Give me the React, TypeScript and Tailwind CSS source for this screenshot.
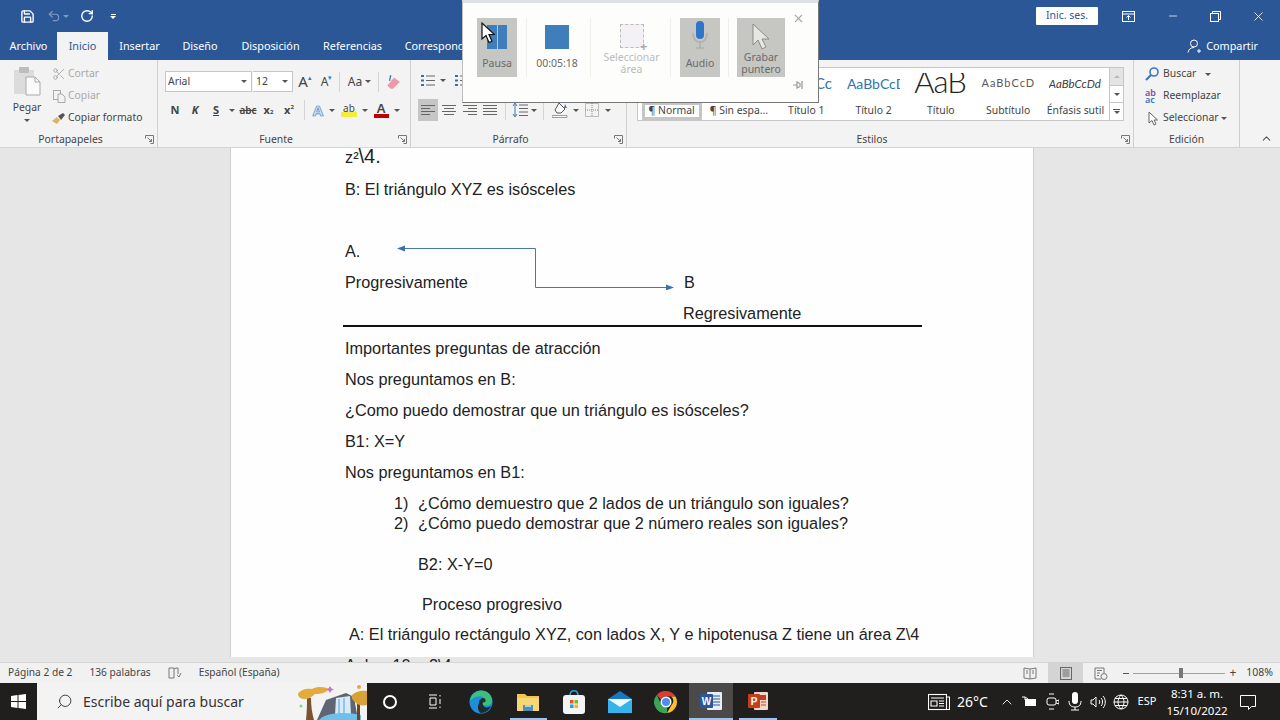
import React from "react";
import { Save, Undo2, RotateCw, X, Minus, Scissors, Search, ChevronUp } from "lucide-react";

function Caret({ color = "#555" }: { color?: string }) {
  return <span className="inline-block w-0 h-0 border-x-[3px] border-t-[3px] border-x-transparent" style={{ borderTopColor: color }} />;
}

function Launcher() {
  return (
    <svg width="9" height="9" viewBox="0 0 9 9" className="shrink-0" fill="none" stroke="#777">
      <path d="M.5 3.500V.500h8v8h-3M2.500 2.500l4 4M6.500 4v2.500H4" />
    </svg>
  );
}

function Sep({ h = "h-[20px]" }: { h?: string }) {
  return <span className={`inline-block w-px bg-[#d4d4d4] ${h}`} />;
}

function Cell({ w, children, className = "" }: { w: string; children?: React.ReactNode; className?: string }) {
  return <span className={`flex items-center justify-center shrink-0 h-full ${w} ${className}`}>{children}</span>;
}

function Group({ w, label, launcher = true, children }: { w: string; label: string; launcher?: boolean; children: React.ReactNode }) {
  return (
    <div className={`flex flex-col h-full shrink-0 border-r border-[#cfcfcf] ${w}`}>
      <div className="flex-1 min-h-0">{children}</div>
      <div className={`flex items-center h-[19px] pt-[4px] text-[#444] ${launcher ? "pr-[3px]" : ""}`}>
        <span className={`flex-1 text-center ${launcher ? "pr-[4px]" : ""}`}>{label}</span>
        {launcher && <Launcher />}
      </div>
    </div>
  );
}

function AlignIcon({ lines }: { lines: [number, number][] }) {
  return (
    <svg width="14" height="12" viewBox="0 0 14 12" stroke="#666" strokeWidth="1">
      {lines.map((l, i) => (
        <path key={i} d={`M${l[0]} ${1.5 + i * 3}H${l[1]}`} />
      ))}
    </svg>
  );
}

function Clipboard() {
  return (
    <div className="flex flex-col items-center w-[45px] pl-[9px] shrink-0">
      <svg width="28" height="30" viewBox="0 0 28 30" className="mt-[6px]">
        <rect x="1" y="4" width="20" height="24" fill="#dcdcdc" />
        <rect x="6" y="1" width="10" height="6" rx="1" fill="#bdbdbd" />
        <path d="M13 11h9l5 5v13H13z" fill="#fafafa" stroke="#aaa" />
        <path d="M22 11v5h5" fill="none" stroke="#aaa" />
      </svg>
      <span className="text-[#444] mt-[3px] leading-[16px]">Pegar</span>
      <span className="mt-[4px] flex"><Caret /></span>
    </div>
  );
}

function ClipboardRows() {
  return (
    <div className="flex flex-col pt-[3px] pl-[5px]">
      <div className="flex items-center h-[22px] text-[#a9a9a9]">
        <span className="w-[18px] flex justify-center"><Scissors size={14} color="#a0a0a0" strokeWidth={1.4} /></span>
        <span>Cortar</span>
      </div>
      <div className="flex items-center h-[22px] text-[#a9a9a9]">
        <span className="w-[18px] flex justify-center">
          <svg width="13" height="13" viewBox="0 0 13 13" fill="#f3f3f3" stroke="#aaa">
            <rect x=".5" y=".5" width="7" height="9" />
            <path d="M5 4h4l3 3v5.500H5z" />
          </svg>
        </span>
        <span>Copiar</span>
      </div>
      <div className="flex items-center h-[22px] text-[#444]">
        <span className="w-[18px] flex justify-center">
          <svg width="15" height="13" viewBox="0 0 15 13">
            <path d="M0 9l5-4 3 3-3 4z" fill="#e3b15f" />
            <path d="M6 4l5-3 2 2-4 5z" fill="#555" />
          </svg>
        </span>
        <span className="whitespace-nowrap">Copiar formato</span>
      </div>
    </div>
  );
}

function FontGroup() {
  return (
    <div className="pt-[11px] pl-[7px] text-[#444]">
      <div className="flex items-center h-[21px]">
        <div className="flex items-center justify-between w-[87px] h-full bg-white border border-[#c6c6c6] pl-[2px] pr-[4px]">
          <span>Arial</span>
          <Caret />
        </div>
        <div className="flex items-center justify-between w-[40px] h-full bg-white border border-l-0 border-[#c6c6c6] pl-[3px] pr-[4px] ml-px">
          <span>12</span>
          <Caret />
        </div>
        <Cell w="w-[22px] ml-[1px]" className="text-[15px]">A<sup className="text-[7px] text-[#3b78b8]">▴</sup></Cell>
        <Cell w="w-[21px]" className="text-[12px]">A<sup className="text-[7px] text-[#3b78b8]">▾</sup></Cell>
        <Cell w="w-[4px]"><Sep /></Cell>
        <Cell w="w-[37px]" className="gap-[3px] text-[12px]">Aa<Caret /></Cell>
        <Cell w="w-[1px]"><Sep /></Cell>
        <Cell w="w-[28px]">
          <svg width="16" height="16" viewBox="0 0 14 14">
            <path d="M5 13l-3-3 6-7 5 4-6 6z" fill="#ea9aa8" />
            <path d="M5 1l-1 5" stroke="#3b78b8" strokeWidth="1.2" />
          </svg>
        </Cell>
      </div>
      <div className="flex items-center h-[22px] mt-[7px] text-[11px]">
        <Cell w="w-[20px]" className="font-bold">N</Cell>
        <Cell w="w-[20px]" className="font-bold italic">K</Cell>
        <Cell w="w-[20px] ml-px" className="font-bold underline">S</Cell>
        <Cell w="w-[12px]"><Caret /></Cell>
        <Cell w="w-[20px]" className="line-through text-[10px] font-semibold">abc</Cell>
        <Cell w="w-[21px]" className="font-bold">x<sub className="text-[6px]">2</sub></Cell>
        <Cell w="w-[20px]" className="font-bold">x<sup className="text-[6px]">2</sup></Cell>
        <Cell w="w-[10px]"><Sep /></Cell>
        <Cell w="w-[18px]">
          <span className="text-[15px] font-bold text-[#d6e4f5] [-webkit-text-stroke:0.7px_#4a86c5]">A</span>
        </Cell>
        <Cell w="w-[10px]"><Caret /></Cell>
        <Cell w="w-[24px]" className="flex-col leading-none">
          <span className="text-[10px] -mb-[1px]">ab</span>
          <span className="w-[16px] h-[5px] bg-[#f6ec3c]" />
        </Cell>
        <Cell w="w-[8px]"><Caret /></Cell>
        <Cell w="w-[24px]" className="flex-col leading-none">
          <span className="text-[13px] font-semibold -mb-[1px]">A</span>
          <span className="w-[15px] h-[4px] bg-[#c00000]" />
        </Cell>
        <Cell w="w-[8px]"><Caret /></Cell>
      </div>
    </div>
  );
}

function ParagraphGroup() {
  return (
    <div className="pt-[10px] pl-[7px]">
      <div className="flex items-center h-[21px]">
        <Cell w="w-[20px]">
          <svg width="14" height="13" viewBox="0 0 14 13" stroke="#666">
            <path d="M5 2h9M5 6.500h9M5 11h9" />
            <path d="M0 2h3M0 6.500h3M0 11h3" stroke="#3b6ea8" strokeWidth="2" />
          </svg>
        </Cell>
        <Cell w="w-[10px]"><Caret /></Cell>
        <Cell w="w-[4px]" />
        <Cell w="w-[20px]">
          <svg width="14" height="13" viewBox="0 0 14 13" stroke="#666">
            <path d="M5 2h9M5 6.500h9M5 11h9" />
            <path d="M0 2h3M0 6.500h3M0 11h3" stroke="#3b6ea8" strokeWidth="2" />
          </svg>
        </Cell>
      </div>
      <div className="flex items-center h-[22px] mt-[8px]">
        <Cell w="w-[20px]" className="bg-[#c6c6c6]"><AlignIcon lines={[[0, 14], [0, 9], [0, 14], [0, 9]]} /></Cell>
        <Cell w="w-[21px]"><AlignIcon lines={[[0, 14], [2, 12], [0, 14], [2, 12]]} /></Cell>
        <Cell w="w-[21px]"><AlignIcon lines={[[0, 14], [5, 14], [0, 14], [5, 14]]} /></Cell>
        <Cell w="w-[20px]"><AlignIcon lines={[[0, 14], [0, 14], [0, 14], [0, 14]]} /></Cell>
        <Cell w="w-[10px]"><Sep /></Cell>
        <Cell w="w-[20px]">
          <svg width="16" height="16" viewBox="0 0 16 16" fill="none">
            <path d="M7 3h9M7 6.500h9M7 10h9M7 13.500h9" stroke="#666" />
            <path d="M3 2v12M1 4l2-3 2 3M1 12l2 3 2-3" stroke="#3b78b8" />
          </svg>
        </Cell>
        <Cell w="w-[8px]"><Caret /></Cell>
        <Cell w="w-[10px]"><Sep /></Cell>
        <Cell w="w-[23px]">
          <svg width="16" height="16" viewBox="0 0 16 16" fill="none">
            <path d="M7 1l6 6-4 4H5L3 8z" fill="#fafafa" stroke="#555" />
            <path d="M13 2l2 4h-3z" fill="#3b78b8" />
            <path d="M0 13.500h15v2H0z" fill="#fafafa" stroke="#777" strokeWidth=".7" />
          </svg>
        </Cell>
        <Cell w="w-[10px]"><Caret /></Cell>
        <Cell w="w-[21px]">
          <svg width="14" height="14" viewBox="0 0 14 14" fill="none" stroke="#888" strokeDasharray="1 1">
            <rect x=".5" y=".5" width="13" height="13" />
            <path d="M7 0v14M0 7h14" />
          </svg>
        </Cell>
        <Cell w="w-[12px]"><Caret /></Cell>
      </div>
    </div>
  );
}

const styleItems = [
  { label: "¶ Normal", preview: "", cls: "" },
  { label: "¶ Sin espa...", preview: "", cls: "" },
  { label: "Título 1", preview: "AaBbCcD", cls: "text-[#2e74b5] text-[15px] font-['Lato',sans-serif]" },
  { label: "Título 2", preview: "AaBbCcD", cls: "text-[#2e74b5] text-[14px] font-['Lato',sans-serif]" },
  { label: "Título", preview: "AaB", cls: "text-[#222] text-[31px] leading-[21px] tracking-[-1px] font-light font-['Lato',sans-serif] -translate-y-[2px] inline-block" },
  { label: "Subtítulo", preview: "AaBbCcDd", cls: "text-[#5a5a5a] text-[11px] tracking-[1px] font-['Lato',sans-serif]" },
  { label: "Énfasis sutil", preview: "AaBbCcDd", cls: "text-[#404040] text-[11.500px] italic font-['Lato',sans-serif]" },
];

function StylesGroup() {
  return (
    <div className="pt-[7px] pl-[10px]">
      <div className="flex w-[487px] h-[54px] bg-white border border-[#c6c6c6]">
        <div className="flex w-[472px]">
          {styleItems.map((s, i) => (
            <div key={s.label} className="flex flex-col items-center w-[67.300px] shrink-0">
              <div className="flex items-start w-full h-[34px] pt-[5px]">
                <div className="flex items-center w-full h-[21px] overflow-hidden whitespace-nowrap mx-[7px]">
                  <span className={s.cls}>{s.preview}</span>
                </div>
              </div>
              <div className={`flex items-center justify-center text-[#444] h-[18px] whitespace-nowrap ${i === 0 ? "w-[60px] border-[3px] border-[#c6c6c6]" : ""}`}>
                {s.label}
              </div>
            </div>
          ))}
        </div>
        <div className="flex flex-col w-[14px] h-full border-l border-[#c6c6c6] ml-auto">
          <div className="flex-1 bg-[#e4e4e4] flex items-center justify-center"><span className="w-0 h-0 border-x-[3px] border-b-[3px] border-x-transparent border-b-[#bbb]" /></div>
          <div className="flex-1 border-y border-[#c6c6c6] flex items-center justify-center"><Caret /></div>
          <div className="flex-1 flex flex-col gap-[1px] items-center justify-center"><span className="w-[7px] h-px bg-[#555]" /><Caret /></div>
        </div>
      </div>
    </div>
  );
}

function EditGroup() {
  return (
    <div className="flex flex-col pt-[3px] pl-[11px] text-[#444]">
      <div className="flex items-center h-[22px]">
        <span className="w-[18px]">
          <svg width="14" height="14" viewBox="0 0 14 14" fill="none">
            <circle cx="9" cy="5" r="4" stroke="#3b78b8" strokeWidth="1.6" />
            <path d="M6 8l-5 5" stroke="#3b78b8" strokeWidth="2.200" />
          </svg>
        </span>
        <span>Buscar</span>
        <span className="ml-[9px] flex"><Caret /></span>
      </div>
      <div className="flex items-center h-[22px]">
        <span className="w-[18px] text-[9px] leading-[7px] font-semibold">
          <span className="text-[#7e4a9e]">ab</span><br /><span className="text-[#3b78b8]">ac</span>
        </span>
        <span>Reemplazar</span>
      </div>
      <div className="flex items-center h-[22px]">
        <span className="w-[18px] pl-[3px]">
          <svg width="10" height="15" viewBox="0 0 10 15" fill="#fff" stroke="#666">
            <path d="M1 1v11l3-2.500 2 4.500 2-1-2-4h3.500z" />
          </svg>
        </span>
        <span>Seleccionar</span>
        <span className="ml-[2px] flex"><Caret /></span>
      </div>
    </div>
  );
}

function Ribbon() {
  return (
    <div className="flex h-[88px] bg-[#f3f3f3] border-b border-[#d5d5d5] text-[10.400px] shrink-0">
      <Group w="w-[158px]" label="Portapapeles">
        <div className="flex">
          <Clipboard />
          <ClipboardRows />
        </div>
      </Group>
      <Group w="w-[253px]" label="Fuente"><FontGroup /></Group>
      <Group w="w-[216px]" label="Párrafo"><ParagraphGroup /></Group>
      <Group w="w-[507px]" label="Estilos"><StylesGroup /></Group>
      <Group w="w-[106px]" label="Edición" launcher={false}><EditGroup /></Group>
      <div className="flex-1 flex items-end justify-center pb-[2px] pl-[12px]">
        <ChevronUp size={13} color="#555" />
      </div>
    </div>
  );
}

const tabs = [
  { name: "Archivo", w: "w-[57px]" },
  { name: "Inicio", w: "w-[51px]" },
  { name: "Insertar", w: "w-[63px]" },
  { name: "Diseño", w: "w-[58px]" },
  { name: "Disposición", w: "w-[83px]" },
  { name: "Referencias", w: "w-[81px]" },
  { name: "Correspondencia", w: "w-[110px]" },
];

function TitleArea() {
  return (
    <div className="bg-[#2b5797] text-white shrink-0">
      <div className="flex items-center h-[32px]">
        <span className="ml-[20px]"><Save size={15} strokeWidth={2.2} /></span>
        <span className="ml-[12px] flex items-center gap-[2px] opacity-40">
          <Undo2 size={14} /><Caret color="#fff" />
        </span>
        <span className="ml-[11px]"><RotateCw size={14} strokeWidth={2.4} /></span>
        <span className="ml-[16px] flex flex-col items-center gap-[1px]"><span className="w-[5px] h-px bg-white" /><Caret color="#fff" /></span>
        <div className="ml-auto flex items-center h-full">
          <span className="flex items-center justify-center w-[62px] h-[18px] bg-white text-[#2b5797] text-[10.500px] rounded-[1px]">Inic. ses.</span>
          <span className="ml-[24px]">
            <svg width="13" height="11" viewBox="0 0 13 11" fill="none" stroke="#fff">
              <rect x=".5" y=".5" width="12" height="10" />
              <path d="M.5 3h12M6.500 9V5M4.500 6.500l2-2 2 2" />
            </svg>
          </span>
          <span className="ml-[32px]"><Minus size={12} strokeWidth={1.5} /></span>
          <span className="ml-[31px]">
            <svg width="11" height="11" viewBox="0 0 11 11" fill="none" stroke="#fff">
              <rect x=".5" y="2.500" width="8" height="8" />
              <path d="M2.500 2.500v-2h8v8h-2" />
            </svg>
          </span>
          <span className="ml-[30px] mr-[14px]"><X size={15} strokeWidth={1.3} /></span>
        </div>
      </div>
      <div className="flex items-stretch h-[28px] text-[10.800px]">
        {tabs.map((t) => (
          <span
            key={t.name}
            className={`flex items-center justify-center whitespace-nowrap ${t.w} ${t.name === "Inicio" ? "bg-[#f3f3f3] text-[#2b5797]" : ""}`}
          >
            {t.name}
          </span>
        ))}
        <span className="ml-auto mr-[22px] flex items-center gap-[4px]">
          <svg width="15" height="16" viewBox="0 0 15 15" fill="none" stroke="#fff">
            <circle cx="7" cy="5" r="3.500" />
            <path d="M1 14c.5-3 2.500-5 6-5M10 12.500h4M12 10.500v4" />
          </svg>
          Compartir
        </span>
      </div>
    </div>
  );
}

function Line({ className = "", children }: { className?: string; children?: React.ReactNode }) {
  return <p className={`h-[31px] leading-[31px] whitespace-nowrap ${className}`}>{children}</p>;
}

function Page() {
  return (
    <div className="flex-1 min-h-0 bg-[#e6e6e6] overflow-hidden">
      <div className="relative ml-[230px] w-[804px] h-full bg-[#fefefe] border-x border-[#cfcfcf] pl-[114px] text-[16.250px] text-[#222] font-['Liberation_Sans',Arial,sans-serif]">
        <div className="-mt-[5.500px]">
          <Line className="-translate-y-[2px]">z²<span className="text-[20px]">\4.</span></Line>
          <Line>B: El triángulo XYZ es isósceles</Line>
          <Line />
          <Line>A.</Line>
          <Line className="flex"><span className="w-[339px]">Progresivamente</span><span>B</span></Line>
          <Line className="pl-[338px]">Regresivamente</Line>
          <div className="w-[579px] -ml-[2px] h-[2px] bg-[#111] -mt-[4px] mb-[6px]" />
          <Line>Importantes preguntas de atracción</Line>
          <Line>Nos preguntamos en B:</Line>
          <Line>¿Como puedo demostrar que un triángulo es isósceles?</Line>
          <Line>B1: X=Y</Line>
          <Line>Nos preguntamos en B1:</Line>
          <ol className="pl-[49px] leading-[20px] mt-[5px]">
            <li className="flex h-[20.500px]"><span className="w-[24px]">1)</span>¿Cómo demuestro que 2 lados de un triángulo son iguales?</li>
            <li className="flex h-[20.500px]"><span className="w-[24px]">2)</span>¿Cómo puedo demostrar que 2 número reales son iguales?</li>
          </ol>
          <p className="pl-[73px] h-[20px] leading-[20px] mt-[20px]">B2: X-Y=0</p>
          <p className="pl-[77px] h-[20px] leading-[20px] mt-[20px]">Proceso progresivo</p>
          <Line className="pl-[4px] mt-[5px]">A: El triángulo rectángulo XYZ, con lados X, Y e hipotenusa Z tiene un área Z\4</Line>
          <Line>A: b = 10 = 2\4</Line>
        </div>
        {/* flecha del diagrama */}
        <svg className="absolute left-[166px] top-[92px] translate-y-[5px]" width="280" height="50" viewBox="0 0 280 50" fill="none">
          <path d="M7 8.500h131.500v39H270" stroke="#4a76b0" strokeWidth="1" />
          <path d="M0 8.500L8 5.500v6z" fill="#3f6fb0" />
          <path d="M277 47.500l-8-3v6z" fill="#3f6fb0" />
        </svg>
      </div>
    </div>
  );
}

function StatusBar() {
  return (
    <div className="flex items-center h-[21px] bg-[#f1f1f1] border-t border-[#d5d5d5] text-[10.200px] text-[#444] shrink-0">
      <span className="ml-[8px]">Página 2 de 2</span>
      <span className="ml-[17px]">136 palabras</span>
      <svg className="ml-[17px]" width="14" height="13" viewBox="0 0 14 13" fill="none" stroke="#777">
        <path d="M1 1h5v10H1zM6 2c1-1 3-1 4-1v6M9 8l2 2 2-4" />
      </svg>
      <span className="ml-[17px]">Español (España)</span>
      <div className="ml-auto flex items-center h-full">
        <svg width="14" height="13" viewBox="0 0 14 13" fill="none" stroke="#777" className="mr-[11px]">
          <path d="M1 1l6 1 6-1v10l-6 1-6-1zM7 2v10M3 4h2M3 6h2M9 4h2M9 6h2" />
        </svg>
        <span className="flex items-center justify-center w-[35px] h-full bg-[#d4d4d4]">
          <svg width="12" height="13" viewBox="0 0 12 13" fill="none" stroke="#666">
            <rect x=".5" y=".5" width="11" height="12" />
            <path d="M2.500 3h7M2.500 5h7M2.500 7h7M2.500 9h7" />
          </svg>
        </span>
        <svg width="14" height="13" viewBox="0 0 14 13" fill="none" stroke="#777" className="ml-[11px]">
          <path d="M1 1h9v5M1 1v11h6M3 3.500h5M3 6h3M3 8.500h2" />
          <circle cx="10" cy="9.500" r="3" />
        </svg>
        <span className="ml-[15px] w-[6px] h-px bg-[#555]" />
        <div className="flex items-center justify-center ml-[4px] pl-[4px] w-[92px] h-px bg-[#a0a0a0]">
          <span className="w-[4px] h-[10px] bg-[#777]" />
        </div>
        <span className="ml-[4px] text-[12px] leading-none">+</span>
        <span className="ml-[10px] mr-[7px] text-[10.500px]">108%</span>
      </div>
    </div>
  );
}

function SearchArt() {
  return (
    <svg width="70" height="37" viewBox="0 0 70 37" className="shrink-0">
      <circle cx="4" cy="23" r="1.500" fill="#7fd78f" />
      <path d="M9 37c1-9 1-15 1-22h4c0 8 1 15 3 22z" fill="#7a5230" />
      <path d="M1 11c2-4 8-6 14-5 6-3 13-2 17 0-3 4-8 5-14 5-3 3-7 5-10 5-4 0-7-2-7-5z" fill="#e2ab3c" />
      <path d="M33 3l1.500 2.500 2.500 1-2.500 1L33 10l-1.500-2.500-2.500-1 2.500-1z" fill="#c26fd8" />
      <circle cx="62" cy="4" r="2" fill="#e8a93a" />
      <path d="M20 37l9-20 20-7 8 4 4 23z" fill="#5f6672" />
      <path d="M38 32l1-17 14-2 1 19z" fill="#d8eaf8" />
      <path d="M42 16v14M47 15v15" stroke="#7fb6e4" strokeWidth="1.500" />
      <path d="M22 37c5-7 26-9 42-5v5z" fill="#6fc0e8" />
      <path d="M60 37V18h3v19z" fill="#6a4726" />
      <path d="M55 12c3-3 9-5 15-4v14c-5 1-10 0-12-3-3-2-4-5-3-7z" fill="#d8a235" />
    </svg>
  );
}

function Taskbar() {
  return (
    <div className="flex items-center h-[37px] bg-[#201f1d] text-white shrink-0">
      <span className="flex items-center justify-center w-[37px] h-full shrink-0">
        <svg width="15" height="15" viewBox="0 0 15 15" fill="#fff">
          <path d="M0 2l6.500-1v6H0zM7.500 1L15 0v7H7.500zM0 8h6.500v6L0 13zM7.500 8H15v7l-7.500-1z" />
        </svg>
      </span>
      <div className="flex items-center w-[330px] h-full bg-[#f3f3f3] text-[#333] shrink-0">
        <span className="ml-[19px]"><Search size={17} color="#333" strokeWidth={1.3} className="-scale-x-100" /></span>
        <span className="ml-[10px] text-[14px] flex-1">Escribe aquí para buscar</span>
        <SearchArt />
      </div>
      <Cell w="w-[46px]" className="ml-0">
        <span className="w-[14px] h-[14px] rounded-full border-2 border-white" />
      </Cell>
      <Cell w="w-[44px]">
        <svg width="15" height="15" viewBox="0 0 15 15" fill="none" stroke="#fff">
          <path d="M1 1h8M1 14h8M2 4h6v7H2zM12 1v1.500M12 5v5M12 12.500V14" />
        </svg>
      </Cell>
      <Cell w="w-[48px]">
        <svg width="24" height="24" viewBox="0 0 24 24">
          <circle cx="12" cy="12" r="11.500" fill="#1b8fdc" />
          <path d="M1 11C2 4 7 .5 12 .500c6 0 11 4 11 10 0 4-3 5-6 5-3 0-4-1-4-2 0-3 3-3 1-6-2-2-8-2-13 3.500z" fill="#3ac07c" />
          <path d="M10 13c0-3 2-5 5-5 2 1 2 3 1 4-2 0-3 1-2 3 1 3 5 3 8 1-2 4-5 7-10 7-3-1-4-6-2-10z" fill="#201f1d" opacity=".9" />
        </svg>
      </Cell>
      <div className="flex flex-col items-center w-[46px] h-full shrink-0">
        <span className="flex-1 flex items-center">
          <svg width="22" height="20" viewBox="0 0 22 20">
            <path d="M0 3h8l2 2h12v15H0z" fill="#f1c64f" />
            <path d="M0 7h22v13H0z" fill="#f7d774" />
            <path d="M6 14h10v6H6z" fill="#4f8fb8" />
            <path d="M8 14h6v2H8z" fill="#a6d2ec" />
          </svg>
        </span>
        <span className="w-[37px] h-[2px] bg-[#9cc4ee]" />
      </div>
      <Cell w="w-[46px]">
        <svg width="22" height="24" viewBox="0 0 22 24">
          <path d="M7 6c0-7 8-7 8 0" fill="none" stroke="#2b9de0" strokeWidth="1.600" />
          <rect x="0" y="5" width="22" height="19" rx="3" fill="#f4f4f4" />
          <path d="M7 10h3.500v3.500H7z" fill="#e8532b" />
          <path d="M11.500 10H15v3.500h-3.500z" fill="#78b928" />
          <path d="M7 14.500h3.500V18H7z" fill="#2b9de0" />
          <path d="M11.500 14.500H15V18h-3.500z" fill="#f3b81f" />
        </svg>
      </Cell>
      <Cell w="w-[46px]">
        <svg width="24" height="22" viewBox="0 0 24 22">
          <path d="M0 8L12 0l12 8v14H0z" fill="#1877c4" />
          <path d="M0 8h24v14H0z" fill="#35b3ea" />
          <path d="M0 8h24L12 16z" fill="#eef8fd" />
        </svg>
      </Cell>
      <Cell w="w-[46px]">
        <svg width="24" height="24" viewBox="0 0 24 24">
          <path d="M12 1a11 11 0 0 1 9.500 5.500H12a5.500 5.500 0 0 0-5 3.200L2.800 5A11 11 0 0 1 12 1z" fill="#dc3d30" />
          <path d="M21.500 6.500A11 11 0 0 1 13 23l4.700-8.200a5.500 5.500 0 0 0-.5-8.300z" fill="#fbc02d" />
          <path d="M13 23A11 11 0 0 1 2.800 5L7.500 15a5.500 5.500 0 0 0 5.500 2.500z" fill="#3aa655" />
          <circle cx="12" cy="12" r="5.500" fill="#fff" />
          <circle cx="12" cy="12" r="4" fill="#4a8ef0" />
        </svg>
      </Cell>
      <div className="flex flex-col items-center justify-between w-[44px] h-full bg-[#4b4a48] shrink-0">
        <span className="flex-1 flex items-center">
          <svg width="22" height="20" viewBox="0 0 22 20">
            <rect x="7" y="1" width="15" height="18" rx="1" fill="#e8eef6" />
            <path d="M13 5h7M13 8h7M13 11h7M13 14h7" stroke="#2b579a" />
            <rect x="0" y="3" width="13" height="14" rx="1" fill="#2b579a" />
            <text x="6.500" y="13.500" textAnchor="middle" fontSize="10" fontWeight="700" fill="#fff" fontFamily="Liberation Sans">W</text>
          </svg>
        </span>
        <span className="w-full h-[2px] bg-[#9cc4ee]" />
      </div>
      <div className="flex flex-col items-center w-[38px] h-full ml-[6px] shrink-0">
        <span className="flex-1 flex items-center">
          <svg width="20" height="20" viewBox="0 0 20 20">
            <rect x="6" y="1" width="14" height="18" rx="1" fill="#f0d8cf" />
            <path d="M13 11h5M13 14h5" stroke="#c43e1c" />
            <path d="M12 4h6v5h-6z" fill="#c43e1c" />
            <rect x="0" y="3" width="12" height="14" rx="1" fill="#c43e1c" />
            <text x="6" y="13.500" textAnchor="middle" fontSize="10" fontWeight="700" fill="#fff" fontFamily="Liberation Sans">P</text>
          </svg>
        </span>
        <span className="w-full h-[2px] bg-[#9cc4ee]" />
      </div>
      <div className="ml-auto flex items-center h-full">
        <svg width="22" height="18" viewBox="0 0 22 18" fill="none" stroke="#fff" strokeWidth="1.100">
          <rect x=".5" y="1.500" width="18" height="15" />
          <path d="M18.500 4h3v12.500h-3M3 5h13M3 8h6v5H3zM11 8h5M11 10.500h5M11 13h5" />
        </svg>
        <span className="ml-[7px] text-[14px] w-[42px]">26°C</span>
        <span><ChevronUp size={16} strokeWidth={1.3} /></span>
        <Cell w="w-[22px] h-[16px] ml-[3px]">
          <svg width="15" height="12" viewBox="0 0 15 12" fill="none" stroke="#fff"><rect x="3.500" y="3.500" width="10" height="6" fill="#fff" /><path d="M0 1h3v3M3 1l3 2" /></svg>
        </Cell>
        <Cell w="w-[24px] h-[18px]">
          <svg width="13" height="17" viewBox="0 0 13 17" fill="none" stroke="#fff"><path d="M3 1h5M3 16h5" /><rect x="1" y="5" width="9" height="7" rx="2" /><path d="M10 8l3-1v4l-3-1" /></svg>
        </Cell>
        <Cell w="w-[22px] h-[20px]">
          <svg width="14" height="19" viewBox="0 0 14 19" fill="#fff"><rect x="4" y="0" width="6" height="12" rx="3" /><path d="M1 9c0 5 3 6 6 6s6-1 6-6M7 15v3M3 18h8" fill="none" stroke="#fff" /></svg>
        </Cell>
        <Cell w="w-[23px] h-[18px]">
          <svg width="16" height="14" viewBox="0 0 16 14" fill="none" stroke="#fff"><path d="M1 5h2l3-3v10L3 9H1zM9 5c1 1 1 3 0 4M11 3c2 2 2 6 0 8M13 1c3 3 3 9 0 12" /></svg>
        </Cell>
        <Cell w="w-[23px] h-[18px]">
          <svg width="16" height="16" viewBox="0 0 16 16" fill="none" stroke="#fff"><circle cx="8" cy="8" r="7" /><path d="M1 8h14M8 1c-4 4-4 10 0 14M8 1c4 4 4 10 0 14M2 4.500h12M2 11.500h12" /></svg>
        </Cell>
        <span className="ml-[2px] text-[11px] w-[26px] text-center">ESP</span>
        <span className="flex flex-col items-center ml-[2px] w-[70px] text-[11.500px] leading-[17px]">
          <span>8:31 a. m.</span>
          <span>15/10/2022</span>
        </span>
        <span className="ml-[8px] mr-[24px]">
          <svg width="16" height="16" viewBox="0 0 16 16" fill="none" stroke="#fff"><path d="M.5 1.500h15v11h-4l-3 3v-3h-8z" /></svg>
        </span>
      </div>
    </div>
  );
}

function RecorderButton({ w, active, label, children }: { w: string; active?: boolean; label: React.ReactNode; children: React.ReactNode }) {
  return (
    <div className={`flex flex-col items-center h-[59px] shrink-0 ${w} ${active ? "bg-[#c6c6c2]" : ""}`}>
      <div className="flex items-center justify-center shrink-0 h-[34px] mt-[1px]">{children}</div>
      <div className="flex items-center justify-center h-[20px] shrink-0 text-center text-[10.500px] leading-[12px] text-[#6a6a6a]">{label}</div>
    </div>
  );
}

function RecorderSep({ w }: { w: string }) {
  return (
    <div className={`flex justify-center shrink-0 ${w}`}>
      <span className="w-px h-[59px] bg-[#efefec]" />
    </div>
  );
}

function Recorder() {
  return (
    <div className="absolute left-[462px] top-0 w-[357px] h-[103px] bg-[#fdfdfb] border border-t-[3px] border-t-[#dfe2e4] border-l-[#bdbdbd] border-r-[#777] border-b-[#777] pt-[15px] pl-[14px] flex z-10">
      <RecorderButton w="w-[40px]" active label="Pausa">
        <span className="flex gap-[1px] mt-[2px]">
          <span className="w-[10px] h-[24px] bg-[#3f7ebb]" />
          <span className="w-[9px] h-[24px] bg-[#3f7ebb]" />
        </span>
      </RecorderButton>
      <RecorderSep w="w-[18px]" />
      <RecorderButton w="w-[44px]" label="00:05:18">
        <span className="w-[24px] h-[24px] mt-[2px] bg-[#3f7ebb]" />
      </RecorderButton>
      <RecorderSep w="w-[23px]" />
      <RecorderButton w="w-[59px]" label={<span className="text-[#bcbcbc]">Seleccionar<br />área</span>}>
        <span className="relative w-[24px] h-[24px] bg-[#f4f1f6] border border-dashed border-[#bbb]">
          <span className="absolute -right-[5px] -bottom-[5px] text-[13px] leading-[11px] font-bold text-[#aaa]">+</span>
        </span>
      </RecorderButton>
      <RecorderSep w="w-[19px]" />
      <RecorderButton w="w-[40px]" active label="Audio">
        <svg width="20" height="30" viewBox="0 0 20 30" fill="none">
          <rect x="6" y="0" width="8" height="18" rx="4" fill="#2f75c8" />
          <path d="M3 12c0 6 3 9 7 9s7-3 7-9M10 21v6M6 27h8" stroke="#b0b0ac" strokeWidth="1.600" />
        </svg>
      </RecorderButton>
      <RecorderSep w="w-[17px]" />
      <RecorderButton w="w-[48px]" active label={<span>Grabar<br />puntero</span>}>
        <svg width="18" height="28" viewBox="0 0 18 28" fill="#e6e6e2" stroke="#8a8a88" className="mt-[1px]">
          <path d="M1 1v21l5-5 4 9 4-2-4-8h7z" />
        </svg>
      </RecorderButton>
      <div className="flex flex-col items-center justify-between flex-1 h-[71px] pr-[7px]">
        <X size={13} color="#a8a8a8" strokeWidth={2} className="-mt-[6px]" />
        <svg width="11" height="8" viewBox="0 0 11 8" fill="none" stroke="#999" strokeWidth="1.200">
          <path d="M0 4h4M4 1l3 1.500L7 5.500 4 7zM9 0v8" />
        </svg>
      </div>
    </div>
  );
}

export default function App() {
  return (
    <div className="relative flex flex-col w-[1280px] h-[720px] overflow-hidden bg-white text-[11px] font-['Noto_Sans','Open_Sans',sans-serif]">
      <TitleArea />
      <Ribbon />
      <Page />
      <StatusBar />
      <Taskbar />
      <Recorder />
      {/* puntero del ratón grabado */}
      <svg className="absolute left-[481px] top-[22px] z-20" width="14" height="22" viewBox="0 0 14 22" fill="#fff" stroke="#111" strokeWidth="1.200">
        <path d="M1 1v16l4-3.500 3 7 3-1.300-3-6.700h5.500z" />
      </svg>
    </div>
  );
}
